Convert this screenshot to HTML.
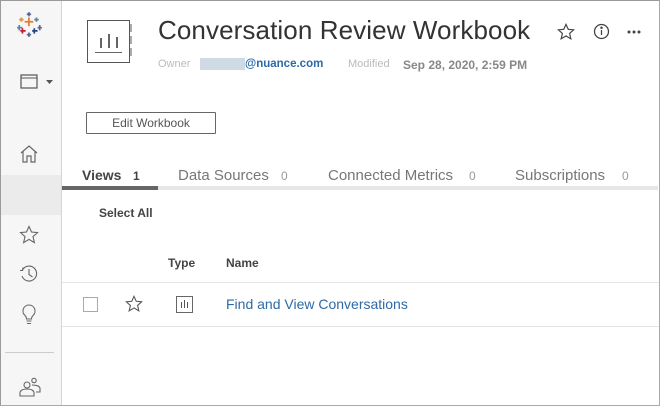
<!DOCTYPE html>
<html><head><style>
*{margin:0;padding:0;box-sizing:border-box}
body{width:668px;height:412px;background:#fff;font-family:"Liberation Sans",sans-serif;position:relative;overflow:hidden}
.frame{position:absolute;left:0;top:0;width:660px;height:406px;border-top:1px solid #9a9a9a;border-left:1px solid #9a9a9a;border-right:1px solid #aaa;border-bottom:1px solid #aaa;background:#fff}
.side{position:absolute;left:1px;top:1px;width:61px;height:404px;background:#f6f6f6;border-right:1px solid #d4d4d4}
.a{position:absolute}
.t{position:absolute;white-space:nowrap}
</style></head><body>
<div class="frame"></div>
<div class="side">
 <div class="a" style="left:0;width:60px;height:40px;top:174px;background:#ebebeb"></div>
 <div class="a" style="left:4px;width:49px;height:1px;top:351px;background:#ccc"></div>
</div>
<svg class="a" style="left:16px;top:12px" width="28" height="26" viewBox="0 0 26 24">
<g stroke-width="1.6">
<path d="M12 5v8M8 9h8" stroke="#e8762d"/>
<path d="M12 0v4M10 2h4" stroke="#5b6591"/>
<path d="M5 5v4M3 7h4" stroke="#eb912b"/>
<path d="M19 5v4M17 7h4" stroke="#59879b"/>
<path d="M3 12v5M1 14.5h5" stroke="#59879b"/>
<path d="M22 12v5M20 14.5h4" stroke="#5b6591"/>
<path d="M6 15v5M4 17.5h5" stroke="#c72035"/>
<path d="M17 15v5M15 17.5h5" stroke="#1f457e"/>
<path d="M12 19v4M10 21h4" stroke="#5b6591"/>
</g></svg>
<svg class="a" style="left:20px;top:74px" width="34" height="16" viewBox="0 0 34 16">
<rect x="1" y="1" width="16" height="13" fill="none" stroke="#555" stroke-width="1.2"/>
<path d="M1 4h16" stroke="#555" stroke-width="1"/>
<path d="M26 6h7l-3.5 4z" fill="#555"/>
</svg>
<svg class="a" style="left:19px;top:145px" width="20" height="18" viewBox="0 0 20 18" fill="none" stroke="#666" stroke-width="1.2">
<path d="M2 8L10 1l8 7M4 6v11h4v-6h4v6h4V6"/></svg>
<svg class="a" style="left:19px;top:225px" width="20" height="20" viewBox="0 0 20 20" fill="none" stroke="#666" stroke-width="1.1">
<path d="M10 1.5l2.5 5.5 6 .6-4.5 4 1.4 6-5.4-3.2-5.4 3.2 1.4-6-4.5-4 6-.6z"/></svg>
<svg class="a" style="left:19px;top:264px" width="20" height="20" viewBox="0 0 20 20" fill="none" stroke="#666" stroke-width="1.1">
<path d="M3.5 6A7.5 7.5 0 1 1 3 12"/><path d="M1 6.5l2.5 0 .5-3"/><path d="M10 5v5.5l3.5 2.5"/></svg>
<svg class="a" style="left:21px;top:304px" width="16" height="22" viewBox="0 0 16 22" fill="none" stroke="#666" stroke-width="1.1">
<path d="M8 1a6 6 0 0 0-4 10.5c1 1 1.5 2 1.5 3.5h5c0-1.5.5-2.5 1.5-3.5A6 6 0 0 0 8 1z"/><path d="M5.5 17h5M6 19.5h4"/></svg>
<svg class="a" style="left:19px;top:377px" width="22" height="20" viewBox="0 0 22 20" fill="none" stroke="#666" stroke-width="1.1">
<circle cx="8" cy="8" r="3"/><circle cx="15" cy="3.5" r="2.2"/><path d="M1 19v-3c0-2 2-4 7-4s7 2 7 4v3z"/><path d="M13 8c4 0 8 1 8 3.5V15h-4"/></svg>

<div class="a" style="left:87px;top:20px;width:43px;height:43px;border:1px solid #555;background:#fff"></div>
<div class="a" style="left:130px;top:24px;width:2px;height:8px;background:#aaa"></div>
<div class="a" style="left:130px;top:36px;width:2px;height:8px;background:#aaa"></div>
<div class="a" style="left:130px;top:48px;width:2px;height:8px;background:#aaa"></div>
<div class="a" style="left:100px;top:38px;width:1.5px;height:10px;background:#666"></div>
<div class="a" style="left:108px;top:34px;width:1.5px;height:14px;background:#666"></div>
<div class="a" style="left:116px;top:37px;width:1.5px;height:11px;background:#666"></div>
<div class="a" style="left:95px;top:52px;width:27px;height:1px;background:#666"></div>

<div class="t" style="left:158px;top:15px;font-size:26px;color:#333;letter-spacing:0.1px">Conversation Review Workbook</div>
<div class="t" style="left:158px;top:58px;font-size:11px;color:#bbb">Owner</div>
<div class="a" style="left:200px;top:58px;width:45px;height:12px;background:#c4cfe0;opacity:.8"></div>
<div class="t" style="left:245px;top:58px;font-size:11.5px;color:#2e6aa6;font-weight:bold">@nuance.com</div>
<div class="t" style="left:348px;top:58px;font-size:11px;color:#bbb">Modified</div>
<div class="t" style="left:403px;top:58px;font-size:12px;color:#888;font-weight:bold">Sep 28, 2020, 2:59 PM</div>
<svg class="a" style="left:557px;top:23px" width="18" height="18" viewBox="0 0 20 20" fill="none" stroke="#444" stroke-width="1.3">
<path d="M10 1.5l2.5 5.5 6 .6-4.5 4 1.4 6-5.4-3.2-5.4 3.2 1.4-6-4.5-4 6-.6z"/></svg>
<svg class="a" style="left:593px;top:23px" width="17" height="17" viewBox="0 0 17 17" fill="none" stroke="#444" stroke-width="1.3">
<circle cx="8.5" cy="8.5" r="7"/><path d="M8.5 7v5"/><circle cx="8.5" cy="4.7" r=".6" fill="#444"/></svg>
<svg class="a" style="left:627px;top:30px" width="14" height="4" viewBox="0 0 14 4" fill="#444">
<circle cx="2" cy="2" r="1.5"/><circle cx="7" cy="2" r="1.5"/><circle cx="12" cy="2" r="1.5"/></svg>

<div class="a" style="left:86px;top:112px;width:130px;height:22px;border:1px solid #666;border-radius:1px"></div>
<div class="t" style="left:86px;top:116px;width:130px;text-align:center;font-size:12px;color:#555">Edit Workbook</div>

<div class="a" style="left:62px;top:186px;width:596px;height:4px;background:#e6e6e6"></div>
<div class="a" style="left:62px;top:186px;width:96px;height:4px;background:#666"></div>
<div class="t" style="left:82px;top:167px;font-size:14px;color:#444;font-weight:bold">Views</div>
<div class="t" style="left:133px;top:169px;font-size:12px;color:#444;font-weight:bold">1</div>
<div class="t" style="left:178px;top:167px;font-size:15px;color:#777">Data Sources</div>
<div class="t" style="left:281px;top:169px;font-size:12px;color:#999">0</div>
<div class="t" style="left:328px;top:167px;font-size:15px;color:#777">Connected Metrics</div>
<div class="t" style="left:469px;top:169px;font-size:12px;color:#999">0</div>
<div class="t" style="left:515px;top:167px;font-size:15px;color:#777">Subscriptions</div>
<div class="t" style="left:622px;top:169px;font-size:12px;color:#999">0</div>

<div class="t" style="left:99px;top:206px;font-size:12px;color:#444;font-weight:bold">Select All</div>
<div class="t" style="left:168px;top:256px;font-size:12px;color:#444;font-weight:bold">Type</div>
<div class="t" style="left:226px;top:256px;font-size:12px;color:#444;font-weight:bold">Name</div>
<div class="a" style="left:62px;top:282px;width:597px;height:1px;background:#e4e4e4"></div>
<div class="a" style="left:62px;top:326px;width:597px;height:1px;background:#e4e4e4"></div>
<div class="a" style="left:83px;top:297px;width:15px;height:15px;border:1px solid #aaa"></div>
<svg class="a" style="left:125px;top:295px" width="18" height="18" viewBox="0 0 20 20" fill="none" stroke="#555" stroke-width="1.2">
<path d="M10 1.5l2.5 5.5 6 .6-4.5 4 1.4 6-5.4-3.2-5.4 3.2 1.4-6-4.5-4 6-.6z"/></svg>
<div class="a" style="left:176px;top:296px;width:17px;height:17px;border:1px solid #666"></div>
<div class="a" style="left:181px;top:302px;width:1px;height:6px;background:#555"></div>
<div class="a" style="left:184px;top:300px;width:1px;height:8px;background:#555"></div>
<div class="a" style="left:187px;top:302px;width:1px;height:6px;background:#555"></div>
<div class="t" style="left:226px;top:296px;font-size:14px;color:#2e6aa6">Find and View Conversations</div>
</body></html>
